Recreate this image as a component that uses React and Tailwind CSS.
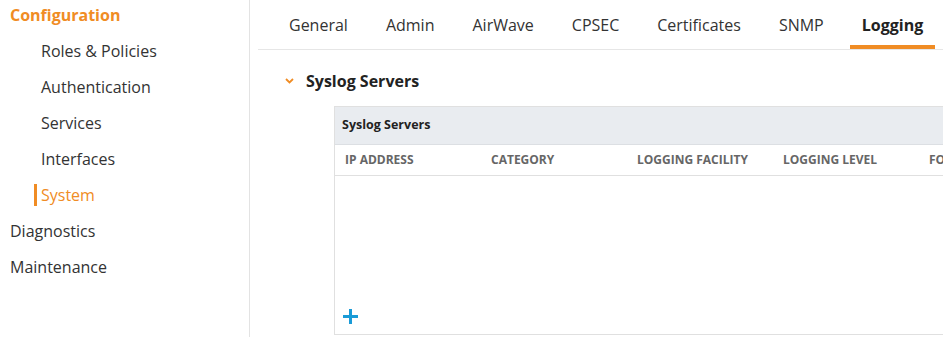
import React from 'react';

const font = { fontFamily: '"Open Sans", "Noto Sans", sans-serif' };

const subItems = ['Roles & Policies', 'Authentication', 'Services', 'Interfaces', 'System'];
const tabs = ['General', 'Admin', 'AirWave', 'CPSEC', 'Certificates', 'SNMP', 'Logging'];
const columns = ['IP ADDRESS', 'CATEGORY', 'LOGGING FACILITY', 'LOGGING LEVEL', 'FORMAT'];

const Sidebar = () => (
  <div className="w-[250px] shrink-0 h-full border-r border-[#e3e3e3] bg-white">
    <div className="-mt-[3px]">
      <div className="h-9 flex items-center pl-[10px] text-[16px] font-bold text-[#f08c24]">Configuration</div>
      <div className="pl-[34px]">
        {subItems.map((item) => (
          <div key={item} className="h-9 flex items-center">
            <span
              className={
                item === 'System'
                  ? 'border-l-[3px] border-[#f08c24] pl-[4px] leading-[22px] text-[16px] text-[#f08c24]'
                  : 'border-l-[3px] border-transparent pl-[4px] leading-[22px] text-[16px] text-[#333]'
              }
            >
              {item}
            </span>
          </div>
        ))}
      </div>
      <div className="h-9 flex items-center pl-[10px] text-[16px] text-[#333]">Diagnostics</div>
      <div className="h-9 flex items-center pl-[10px] text-[16px] text-[#333]">Maintenance</div>
    </div>
  </div>
);

const Tabs = () => (
  <div className="h-[50px] border-b border-[#e6e6e6] flex items-stretch pl-[19px] gap-[14px]">
    {tabs.map((tab) => (
      <div
        key={tab}
        className={
          tab === 'Logging'
            ? 'h-[49px] flex items-center px-3 text-[16px] font-bold text-[#222] shadow-[inset_0_-4px_0_#f08c24]'
            : 'h-[49px] flex items-center px-3 text-[16px] text-[#333]'
        }
      >
        {tab}
      </div>
    ))}
  </div>
);

const SyslogTable = () => (
  <div className="ml-[76px] mt-[14px] w-[760px] h-[229px] border border-[#e0e0e0] border-r-0 flex flex-col">
    <div className="h-[38px] bg-[#e9ecf0] border-b border-[#dcdfe3] flex items-center pl-[7px] text-[12.5px] font-bold text-[#222]">
      Syslog Servers
    </div>
    <div className="h-[31px] border-b border-[#e0e0e0] flex items-center pl-[10px]">
      {columns.map((col) => (
        <div key={col} className="w-[146px] shrink-0 text-[12px] font-bold text-[#666] whitespace-nowrap">
          {col}
        </div>
      ))}
    </div>
    <div className="flex-1 flex items-end pl-[7px] pb-[9px]">
      <svg width="17" height="17" viewBox="0 0 17 17">
        <path d="M8.5 1v15M1 8.5h15" stroke="#1a9bd7" strokeWidth="3" fill="none" />
      </svg>
    </div>
  </div>
);

export default function App() {
  return (
    <div style={font} className="w-[943px] h-[337px] overflow-hidden flex bg-white">
      <Sidebar />
      <div className="flex-1 min-w-0 pl-[8px] overflow-hidden">
        <Tabs />
        <div className="mt-[20px] h-[22px] flex items-center pl-[27px]">
          <svg width="9" height="6" viewBox="0 0 9 6">
            <path d="M1 1l3.5 3.5L8 1" stroke="#f08c24" strokeWidth="1.8" fill="none" />
          </svg>
          <span className="ml-[12px] text-[16px] font-bold text-[#222]">Syslog Servers</span>
        </div>
        <SyslogTable />
      </div>
    </div>
  );
}
